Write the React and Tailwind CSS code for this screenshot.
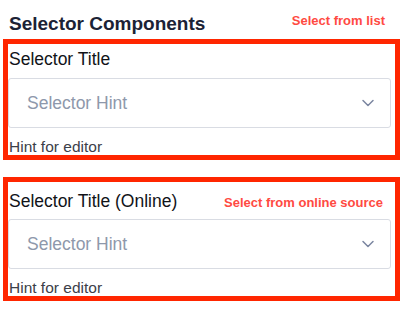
import React from "react";

function Chevron() {
  return (
    <svg width="20" height="20" viewBox="0 0 24 24" fill="none" stroke="#7b86a0" strokeWidth="1.8" strokeLinecap="round" strokeLinejoin="round">
      <path d="m6 9 6 6 6-6" />
    </svg>
  );
}

function Select() {
  return (
    <div className="mr-[4px] h-[50px] rounded-[3px] border border-[#d9dce3] bg-white flex items-center justify-between pl-[18px] pr-[12px]">
      <span className="text-[17.5px] leading-[22px] text-[#8e98ab]">Selector Hint</span>
      <Chevron />
    </div>
  );
}

export default function App() {
  return (
    <div className="w-[400px] h-[310px] bg-white overflow-hidden font-['Liberation_Sans',Arial,sans-serif]">
      <div className="flex items-start justify-between pt-[13px] pl-[9px] pr-[15px]">
        <span className="text-[19px] leading-[22px] font-bold text-[#1b2235]">Selector Components</span>
        <span className="text-[13px] leading-[16px] font-bold text-[#ff4a42]">Select from list</span>
      </div>
      <div className="mt-[4px] ml-[3px] w-[397px] border-[5px] border-[#ff2600] flex flex-col">
        <div className="pt-[4px] pl-[1px] text-[17.5px] leading-[22px] text-[#111318]">Selector Title</div>
        <div className="mt-[8px]">
          <Select />
        </div>
        <div className="mt-[10px] pl-[1px] text-[15.5px] leading-[17px] text-[#3c4049]">Hint for editor</div>
      </div>
      <div className="mt-[17px] ml-[3px] w-[397px] border-[5px] border-[#ff2600] flex flex-col">
        <div className="pt-[8px] pl-[1px] pr-[12px] flex items-baseline justify-between">
          <span className="text-[17.5px] leading-[22px] text-[#111318]">Selector Title (Online)</span>
          <span className="text-[13px] leading-[16px] font-bold text-[#ff4a42]">Select from online source</span>
        </div>
        <div className="mt-[7px]">
          <Select />
        </div>
        <div className="mt-[10px] pl-[1px] text-[15.5px] leading-[17px] text-[#3c4049]">Hint for editor</div>
      </div>
    </div>
  );
}
